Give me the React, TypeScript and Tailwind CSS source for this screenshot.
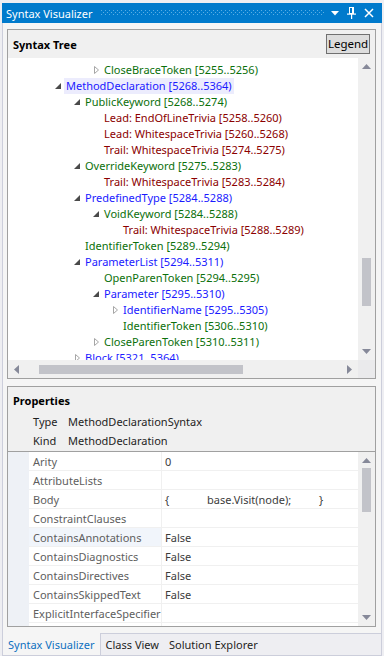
import React from "react";

type Arrow = "open" | "closed" | "none";
type Kind = "node" | "token" | "trivia";
type Row = { level: number; arrow: Arrow; kind: Kind; text: string; selected?: boolean };

const rows: Row[] = [
  { level: 2, arrow: "closed", kind: "token", text: "CloseBraceToken [5255..5256)" },
  { level: 0, arrow: "open", kind: "node", text: "MethodDeclaration [5268..5364)", selected: true },
  { level: 1, arrow: "open", kind: "token", text: "PublicKeyword [5268..5274)" },
  { level: 2, arrow: "none", kind: "trivia", text: "Lead: EndOfLineTrivia [5258..5260)" },
  { level: 2, arrow: "none", kind: "trivia", text: "Lead: WhitespaceTrivia [5260..5268)" },
  { level: 2, arrow: "none", kind: "trivia", text: "Trail: WhitespaceTrivia [5274..5275)" },
  { level: 1, arrow: "open", kind: "token", text: "OverrideKeyword [5275..5283)" },
  { level: 2, arrow: "none", kind: "trivia", text: "Trail: WhitespaceTrivia [5283..5284)" },
  { level: 1, arrow: "open", kind: "node", text: "PredefinedType [5284..5288)" },
  { level: 2, arrow: "open", kind: "token", text: "VoidKeyword [5284..5288)" },
  { level: 3, arrow: "none", kind: "trivia", text: "Trail: WhitespaceTrivia [5288..5289)" },
  { level: 1, arrow: "none", kind: "token", text: "IdentifierToken [5289..5294)" },
  { level: 1, arrow: "open", kind: "node", text: "ParameterList [5294..5311)" },
  { level: 2, arrow: "none", kind: "token", text: "OpenParenToken [5294..5295)" },
  { level: 2, arrow: "open", kind: "node", text: "Parameter [5295..5310)" },
  { level: 3, arrow: "closed", kind: "node", text: "IdentifierName [5295..5305)" },
  { level: 3, arrow: "none", kind: "token", text: "IdentifierToken [5306..5310)" },
  { level: 2, arrow: "closed", kind: "token", text: "CloseParenToken [5310..5311)" },
  { level: 1, arrow: "closed", kind: "node", text: "Block [5321..5364)" },
];

const indent = ["pl-[47px]", "pl-[66px]", "pl-[85px]", "pl-[104px]"];
const color: Record<Kind, string> = {
  node: "text-[#1a1aff]",
  token: "text-[#0b700b]",
  trivia: "text-[#8b0000]",
};

function TreeArrow({ type }: { type: Arrow }) {
  if (type === "open")
    return (
      <svg width="11" height="16" viewBox="0 0 11 16" className="shrink-0">
        <polygon points="6,5 6,11 0,11" fill="#4a4a4a" />
      </svg>
    );
  if (type === "closed")
    return (
      <svg width="11" height="16" viewBox="0 0 11 16" className="shrink-0">
        <polygon points="1.5,4.5 5.5,8 1.5,11.5" fill="none" stroke="#a6a6a6" strokeWidth="1" />
      </svg>
    );
  return <span className="w-[11px] shrink-0" />;
}

function VScroll({ thumbTop, thumbH }: { thumbTop: string; thumbH: string }) {
  return (
    <div className="w-[17px] shrink-0 bg-[#F0F0F0] flex flex-col items-center">
      <svg width="9" height="5" viewBox="0 0 9 5" className="mt-[6px] shrink-0">
        <polygon points="0,5 4.5,0 9,5" fill="#868999" />
      </svg>
      <div className={`w-[9px] bg-[#C2C3C9] shrink-0 ${thumbTop} ${thumbH}`} />
      <div className="flex-1" />
      <svg width="9" height="5" viewBox="0 0 9 5" className="mb-[6px] shrink-0">
        <polygon points="0,0 4.5,5 9,0" fill="#868999" />
      </svg>
    </div>
  );
}

const props: { name: string; value: React.ReactNode; hl?: boolean }[] = [
  { name: "Arity", value: "0" },
  { name: "AttributeLists", value: "" },
  {
    name: "Body",
    value: (
      <span className="flex">
        <span className="w-[42px]">{"{"}</span>
        <span className="w-[112px]">base.Visit(node);</span>
        <span>{"}"}</span>
      </span>
    ),
  },
  { name: "ConstraintClauses", value: "" },
  { name: "ContainsAnnotations", value: "False", hl: true },
  { name: "ContainsDiagnostics", value: "False" },
  { name: "ContainsDirectives", value: "False" },
  { name: "ContainsSkippedText", value: "False" },
  { name: "ExplicitInterfaceSpecifier", value: "" },
  { name: "ExpressionBody", value: "" },
];

export default function App() {
  return (
    <div className="w-[384px] h-[656px] overflow-hidden bg-[#EEEEF2] pt-[3px] flex flex-col font-['Segoe_UI','Noto_Sans',sans-serif] text-[11px] leading-none">
      {/* Title bar */}
      <div className="mx-[2px] h-[20px] shrink-0 bg-[#007ACC] flex items-center pl-[4px] pr-[8px] text-white">
        <span className="text-[11px] whitespace-nowrap">Syntax Visualizer</span>
        <svg className="ml-[8px] flex-1 h-[6px]" height="6">
          <defs>
            <pattern id="grip" width="4" height="4" patternUnits="userSpaceOnUse">
              <rect x="0" y="0" width="1" height="1" fill="#5AAEE4" />
              <rect x="2" y="2" width="1" height="1" fill="#5AAEE4" />
            </pattern>
          </defs>
          <rect x="0" y="0" width="100%" height="5" fill="url(#grip)" />
        </svg>
        <svg width="8" height="5" viewBox="0 0 8 5" className="ml-[7px] shrink-0">
          <polygon points="0,0 8,0 4,4.5" fill="#ffffff" />
        </svg>
        <svg width="9" height="12" viewBox="0 0 9 12" className="ml-[8px] shrink-0">
          <rect x="2.5" y="0.5" width="4" height="6" fill="none" stroke="#fff" strokeWidth="1" />
          <rect x="5" y="0" width="1.5" height="7" fill="#fff" />
          <rect x="0" y="6.5" width="9" height="1.2" fill="#fff" />
          <rect x="4" y="7" width="1.2" height="5" fill="#fff" />
        </svg>
        <svg width="10" height="10" viewBox="0 0 10 10" className="ml-[8px] shrink-0">
          <path d="M1 1 L9 9 M9 1 L1 9" stroke="#fff" strokeWidth="1.5" />
        </svg>
      </div>

      {/* Window body */}
      <div className="mx-[2px] flex-1 min-h-0 flex flex-col bg-[#F5F5F5] border-x border-[#CCCEDB]">
        <div className="flex flex-col pt-[6px] pl-[4px] pr-[5px] gap-[7px]">
          {/* Syntax tree box */}
          <div className="h-[350px] border border-[#A0A0A0] flex flex-col">
            <div className="h-[28px] shrink-0 bg-[#F0F0F0] flex items-center justify-between pl-[5px] pr-[5px]">
              <span className="font-bold text-[11px] text-black">Syntax Tree</span>
              <div className="w-[44px] h-[20px] border border-[#707070] bg-[#DDDDDD] flex items-center justify-center text-black text-[11.5px]">
                Legend
              </div>
            </div>
            <div className="h-[302px] flex bg-white">
              <div className="flex-1 min-w-0 overflow-hidden pt-[4px]">
                {rows.map((r, i) => (
                  <div key={i} className={`h-[16px] shrink-0 flex items-center whitespace-nowrap ${indent[r.level]}`}>
                    <TreeArrow type={r.arrow} />
                    <span
                      className={`${color[r.kind]} ${r.selected ? "bg-[#ECECFD] -ml-[2px] px-[2px]" : ""} leading-[16px]`}
                    >
                      {r.text}
                    </span>
                  </div>
                ))}
              </div>
              <VScroll thumbTop="mt-[189px]" thumbH="h-[48px]" />
            </div>
            <div className="h-[18px] flex bg-[#F0F0F0]">
              <div className="flex-1 flex items-center">
                <svg width="5" height="9" viewBox="0 0 5 9" className="ml-[6px] shrink-0">
                  <polygon points="5,0 0,4.5 5,9" fill="#868999" />
                </svg>
                <div className="ml-[20px] w-[204px] h-[9px] bg-[#C2C3C9]" />
                <div className="flex-1" />
                <svg width="5" height="9" viewBox="0 0 5 9" className="mr-[6px] shrink-0">
                  <polygon points="0,0 5,4.5 0,9" fill="#868999" />
                </svg>
              </div>
              <div className="w-[17px] bg-[#EAEAEC]" />
            </div>
          </div>

          {/* Properties box */}
          <div className="h-[241px] border border-[#A0A0A0] flex flex-col bg-[#F0F0F0]">
            <div className="shrink-0 pt-[3px] pb-[1px]">
              <div className="h-[20px] pl-[5px] flex items-center font-bold text-black">Properties</div>
              <div className="mt-[2px] h-[19px] pl-[25px] flex items-center text-[#1e1e1e]">
                <span className="w-[35px]">Type</span>
                <span>MethodDeclarationSyntax</span>
              </div>
              <div className="h-[19px] pl-[25px] flex items-center text-[#1e1e1e]">
                <span className="w-[35px]">Kind</span>
                <span>MethodDeclaration</span>
              </div>
            </div>
            <div className="flex-1 min-h-0 flex border-t border-[#A0A0A0] bg-white">
              <div className="w-[21px] shrink-0 bg-[#EEF1F6]" />
              <div className="flex-1 min-w-0 overflow-hidden">
                {props.map((p, i) => (
                  <div key={i} className="h-[19px] flex border-b border-[#F0F0F0]">
                    <div
                      className={`w-[133px] shrink-0 pl-[4px] flex items-center whitespace-nowrap overflow-hidden border-r border-[#F0F0F0] text-[#5E5E5E] ${p.hl ? "bg-[#F1F5FB]" : ""}`}
                    >
                      {p.name}
                    </div>
                    <div className="flex-1 pl-[3px] flex items-center whitespace-nowrap text-[#3C3C3C]">{p.value}</div>
                  </div>
                ))}
              </div>
              <VScroll thumbTop="mt-[5px]" thumbH="h-[44px]" />
            </div>
          </div>
        </div>

        {/* Tabs */}
        <div className="mt-[6px] h-[23px] shrink-0 flex border-b border-[#CCCEDB]">
          <div className="shrink-0 whitespace-nowrap px-[5px] flex items-center text-[#0E70C0] bg-[#F5F5F5] border-r border-[#CCCEDB]">
            Syntax Visualizer
          </div>
          <div className="flex-1 flex items-center gap-[10px] pl-[5px] whitespace-nowrap border-t border-[#CCCEDB] bg-[#EEEEF2] text-[#1e1e1e]">
            <span>Class View</span>
            <span>Solution Explorer</span>
          </div>
        </div>
      </div>
    </div>
  );
}
